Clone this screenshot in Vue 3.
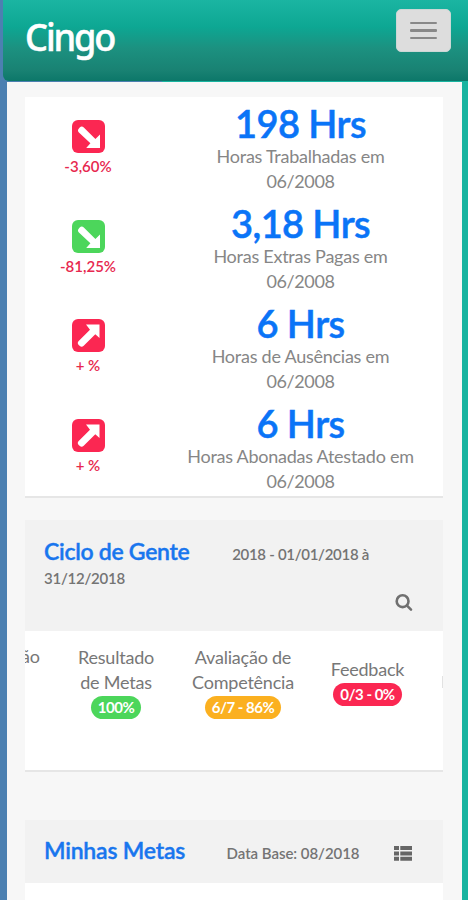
<script setup>
const metrics = [
  { color: 'red', up: false, delta: '-3,60%', value: '198 Hrs', label: 'Horas Trabalhadas em' },
  { color: 'green', up: false, delta: '-81,25%', value: '3,18 Hrs', label: 'Horas Extras Pagas em' },
  { color: 'red', up: true, delta: '+ %', value: '6 Hrs', label: 'Horas de Ausências em' },
  { color: 'red', up: true, delta: '+ %', value: '6 Hrs', label: 'Horas Abonadas Atestado em' },
]
const steps = [
  { lines: ['Resultado', 'de Metas'], badge: '100%', color: 'green' },
  { lines: ['Avaliação de', 'Competência'], badge: '6/7 - 86%', color: 'orange' },
  { lines: ['Feedback'], badge: '0/3 - 0%', color: 'red' },
]
</script>

<template>
  <div class="screen">
    <header class="navbar">
      <svg class="logo" width="92" height="44" viewBox="0 0 92 44">
        <text x="-1" y="34" transform="scale(.95 1)">Cingo</text>
      </svg>
      <button class="toggle" aria-label="Menu"><i></i><i></i><i></i></button>
    </header>
    <main class="content">
      <section class="card metrics">
        <div v-for="m in metrics" :key="m.label" class="metric">
          <div class="trend">
            <svg class="arrow" :class="m.color" width="33" height="33" viewBox="0 0 33 33">
              <rect width="33" height="33" rx="6" />
              <path v-if="m.up" d="M14 5.5H27.5V19L23.3 15.2L11.7 26.8Q9.6 28.7 7.6 26.8L6.7 25.9Q4.8 24 6.7 22L18 10.7Z" />
              <path v-else d="M28 14.5V28H14.2L18.4 23.3L6.9 12.4Q5 10.4 6.9 8.4L7.7 7.5Q9.8 5.7 11.8 7.6L23.4 18.9Z" />
            </svg>
            <span class="delta">{{ m.delta }}</span>
          </div>
          <div class="figure">
            <strong>{{ m.value }}</strong>
            <span>{{ m.label }}</span>
            <span class="period">06/2008</span>
          </div>
        </div>
      </section>

      <section class="card cycle">
        <div class="head cycle-head">
          <div class="title-row">
            <h2>Ciclo de Gente</h2>
            <small>2018 - 01/01/2018 à</small>
          </div>
          <small class="end-date">31/12/2018</small>
          <svg class="search" width="18" height="18" viewBox="0 0 18 18">
            <circle cx="7.6" cy="7.2" r="5.9" /><path d="M12 11.6l4 4" />
          </svg>
        </div>
        <div class="steps">
          <span class="cut">ão</span>
          <div v-for="s in steps" :key="s.badge" class="step">
            <span v-for="l in s.lines" :key="l">{{ l }}</span>
            <b :class="s.color">{{ s.badge }}</b>
          </div>
          <i class="edge"></i>
        </div>
      </section>

      <section class="card goals">
        <div class="head goals-head">
          <h2>Minhas Metas</h2>
          <small>Data Base: 08/2018</small>
          <svg class="list" width="18" height="15" viewBox="0 0 18 15">
            <path d="M0 0h5v4H0zM6.3 0H18v4H6.3zM0 5.4h5v4H0zM6.3 5.4H18v4H6.3zM0 10.8h5v4H0zM6.3 10.8H18v4H6.3z" />
          </svg>
        </div>
      </section>
    </main>
  </div>
</template>

<style>
body { margin: 0; overflow: hidden; }
</style>

<style scoped>
* { box-sizing: border-box; }
.screen {
  width: 468px;
  height: 900px;
  overflow: hidden;
  background: linear-gradient(90deg, #4c80b1 0 162px, #18b4a0 162px);
  font-family: Lato, "Liberation Sans", sans-serif;
  color: #868686;
}
.navbar {
  display: flex;
  justify-content: space-between;
  align-items: flex-start;
  height: 81px;
  margin-left: 3px;
  padding: 9px 17px 0 23px;
  border-radius: 0 0 0 6px;
  background: linear-gradient(#1bb5a2 0, #0da793 27px, #1c9180 48px, #198273 70px, #0c7769 81px);
}
.logo { margin-top: 8px; overflow: visible; }
.logo text {
  font: 500 38px "Noto Sans", sans-serif;
  letter-spacing: -2.2px;
  fill: #fff;
  stroke: #fff;
  stroke-width: 0.5;
  stroke-linejoin: round;
}
.toggle {
  display: flex;
  flex-direction: column;
  align-items: center;
  justify-content: center;
  gap: 5px;
  width: 55px;
  height: 43px;
  padding: 0;
  border: 1px solid #ccd8d6;
  border-radius: 5px;
  background: #ddd;
}
.toggle i { width: 27px; height: 2.5px; border-radius: 1px; background: #888; }
.content {
  height: 818px;
  margin: 1px 6px 0 7px;
  padding: 15px 19px 0 18px;
  background: #f7f7f7;
  overflow: hidden;
}
.card { background: #fff; border-bottom: 2px solid #e6e6e6; }
.metrics { height: 401px; padding-top: 3px; }
.metric { display: grid; grid-template-columns: 126px 1fr; gap: 7px; height: 99.9px; }
.trend { display: flex; flex-direction: column; align-items: center; padding-top: 20px; }
.metric:nth-child(n+3) .trend { padding-top: 19px; }
.arrow path { fill: #fff; }
.red { fill: #fb2752; background-color: #fb2752; }
.green { fill: #4cd65b; background-color: #4cd65b; }
.orange { background-color: #fbb020; }
.arrow { background: none; flex: none; }
.delta { margin-top: 4px; font-size: 15px; line-height: 18px; font-weight: 600; color: #e7284f; }
.figure { display: flex; flex-direction: column; align-items: center; font-size: 18px; line-height: 25px; letter-spacing: -0.25px; }
.figure strong {
  height: 44px;
  font-size: 38px;
  line-height: 46px;
  font-weight: 600;
  letter-spacing: -0.6px;
  color: #0a74f7;
  -webkit-text-stroke: 0.5px #0a74f7;
}
.figure span { white-space: nowrap; }
.figure .period { letter-spacing: -0.4px; }
.cycle { height: 252px; margin-top: 22px; }
.head { background: #f2f2f2; }
h2 {
  margin: 0;
  font-size: 23px;
  line-height: 26px;
  font-weight: 600;
  letter-spacing: -0.28px;
  color: #1976ee;
  white-space: nowrap;
  -webkit-text-stroke: 0.4px #1976ee;
}
small {
  font-size: 15px;
  line-height: 20px;
  font-weight: 600;
  letter-spacing: -0.3px;
  color: #747474;
  white-space: nowrap;
}
.cycle-head { display: flex; flex-direction: column; height: 111px; padding: 18px 30px 0 19px; }
.title-row { display: flex; align-items: baseline; justify-content: space-between; padding-right: 44px; }
.end-date { margin-top: 4px; letter-spacing: -0.25px; }
.search { align-self: flex-end; margin-top: 6px; fill: none; stroke: #707070; stroke-width: 2.6; stroke-linecap: round; }
.steps {
  display: grid;
  grid-template-columns: 28px 126px 128px 121px 1fr;
  align-items: center;
  height: 103px;
  padding-bottom: 2px;
  overflow: hidden;
  font-size: 18px;
  line-height: 25px;
  letter-spacing: -0.22px;
  color: #777;
}
.cut { align-self: start; margin: 13px 0 0 -4px; }
.step { display: flex; flex-direction: column; align-items: center; white-space: nowrap; }
.step b {
  height: 23px;
  margin-top: 1px;
  padding: 0 7px;
  border-radius: 12px;
  font-size: 15px;
  line-height: 22px;
  font-weight: 700;
  letter-spacing: -0.5px;
  color: #fff;
}
.edge { justify-self: end; width: 1px; height: 12px; background: #e2e2e2; }
.goals { margin-top: 48px; height: 100px; }
.goals-head { display: flex; align-items: center; justify-content: space-between; height: 63px; padding: 0 31px 0 19px; }
.goals-head h2 { margin-top: -4px; letter-spacing: -0.2px; }
.goals-head small { margin: 3px 0 0 7px; letter-spacing: -0.05px; }
.list { margin-top: 4px; fill: #666; }
</style>
